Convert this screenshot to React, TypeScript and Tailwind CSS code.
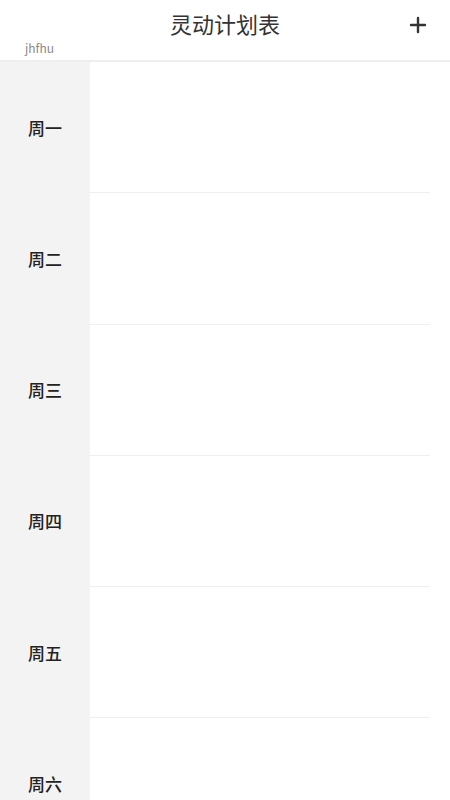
import { Plus } from 'lucide-react';

const days = ['周一', '周二', '周三', '周四', '周五', '周六'];

const App = () => {
  return (
    <div
      className="w-[450px] h-[800px] overflow-hidden bg-white"
      style={{ fontFamily: '"Noto Sans CJK SC", "Noto Sans", sans-serif' }}
    >
      <header className="relative h-[62px] border-b-2 border-[#eeeeee]">
        <h1 className="pt-[7px] text-center text-[22px] leading-[32px] text-[#333333]">
          灵动计划表
        </h1>
        <span className="absolute left-[25px] top-[39px] text-[12px] leading-[18px] text-[#8a8a8a]">
          jhfhu
        </span>
        <button className="absolute right-[20px] top-[13px] text-[#333333]">
          <Plus className="w-6 h-6" strokeWidth={2.4} />
        </button>
      </header>
      <div className="flex">
        <div className="w-[90px] shrink-0 bg-[#f3f3f3]">
          {days.map((d) => (
            <div
              key={d}
              className="h-[131.25px] flex items-center justify-center text-[17px] leading-[20px] font-medium text-[#222222]"
            >
              {d}
            </div>
          ))}
        </div>
        <div className="flex-1 pr-[20px]">
          {days.map((d) => (
            <div key={d} className="h-[131.25px] border-b border-[#efefef]" />
          ))}
        </div>
      </div>
    </div>
  );
};

export default App;
